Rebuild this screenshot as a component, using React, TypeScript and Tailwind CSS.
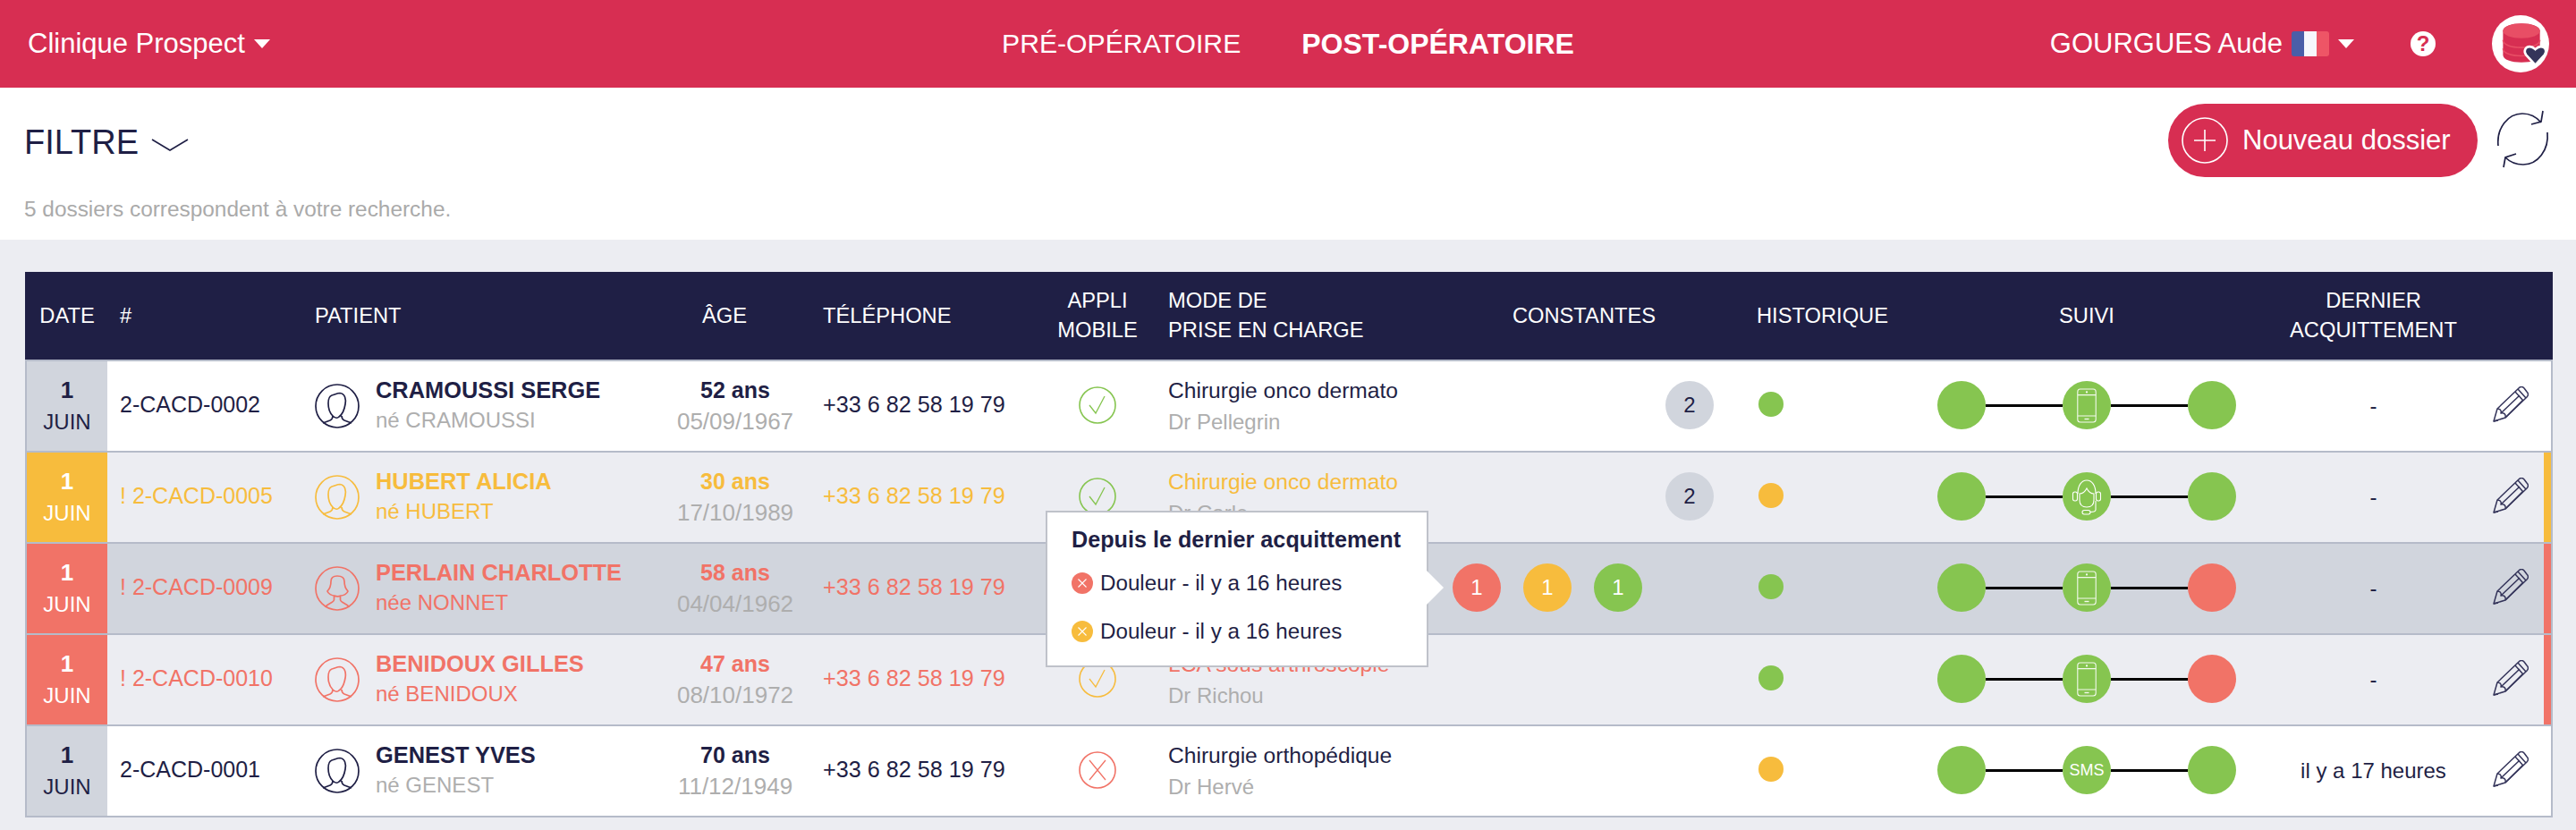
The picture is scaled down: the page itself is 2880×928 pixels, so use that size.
import React from "react";

const gridCols = "grid grid-cols-[90px_232px_378px_160px_280px_114px_340px_340px_202px_354px_267px_65px]";

type Tone = "navy" | "yellow" | "coral";

const textTone: Record<Tone, string> = {
  navy: "text-[#1f1f45]",
  yellow: "text-[#f7bc3d]",
  coral: "text-[#f17367]",
};
const stroke: Record<Tone, string> = { navy: "#1f1f45", yellow: "#f7bc3d", coral: "#f17367" };

const GREEN = "bg-[#86c550]";
const CORAL = "bg-[#f17367]";
const YELLOW = "bg-[#f7bc3d]";

const Caret = () => (
  <svg width="18" height="10" viewBox="0 0 18 10" className="shrink-0">
    <polygon points="0,0 18,0 9,10" fill="#fff" />
  </svg>
);

const PersonIcon = ({ tone, female }: { tone: Tone; female?: boolean }) => (
  <svg width="50" height="50" viewBox="0 0 50 50" fill="none" stroke={stroke[tone]} strokeWidth="1.7" className="shrink-0">
    <circle cx="25" cy="25" r="24" />
    {female ? (
      <path d="M25 11c-4 0-7 2-7 6 0 5-1 8-4 11 1 3 5 5 8 5 2 1 5 1 7 0 3 0 7-2 8-5-3-3-4-6-4-11 0-4-3-6-8-6ZM21.500 33.500v4c0 3-6 4-10 8M28.500 33.500v4c0 3 6 4 10 8" />
    ) : (
      <path d="M28 10.500c-3 0-6 2-9 2.500-3 1-4 4-4 9 0 6 2 11 5 14 2 2 5 3 7 1 3-2 6-8 7-14 1-5 0-12-6-12.500ZM20 36c0 3-1 4-3 5l-8 3M30 36c0 3 1 4 3 5l8 3" />
    )}
  </svg>
);

const PencilIcon = () => (
  <svg width="40" height="40" viewBox="0 0 40 40" fill="none" stroke="#34345a" strokeWidth="1.5" strokeLinejoin="round" className="shrink-0">
    <path d="M1 39 5 25 29 2c2-2 4-2 6 0l3 4c2 2 2 4 0 6L14 35Z" />
    <path d="M5 25c3 0 5 2 4 5 3-1 6 1 5 5M25 6l9 10M28 3l9 10M9 30 30 10M14 35 34 15M1 39l5-1" />
  </svg>
);

const CheckIcon = ({ color }: { color: string }) => (
  <svg width="42" height="42" viewBox="0 0 42 42" fill="none" stroke={color} className="shrink-0">
    <circle cx="21" cy="21" r="20" strokeWidth="1.6" />
    <path d="M12 21l7 9 10-19" strokeWidth="1.3" />
  </svg>
);

const CrossIcon = ({ color }: { color: string }) => (
  <svg width="42" height="42" viewBox="0 0 42 42" fill="none" stroke={color} className="shrink-0">
    <circle cx="21" cy="21" r="20" strokeWidth="1.6" />
    <path d="M12 10l18 22M30 10 12 32" strokeWidth="1.3" />
  </svg>
);

const PhoneGlyph = () => (
  <svg width="54" height="54" viewBox="0 0 54 54" fill="none" stroke="#fff" strokeWidth="1.1" opacity="0.9">
    <rect x="16.8" y="9" width="20.4" height="37" rx="3" />
    <path d="M16.8 15.6h20.4M16.8 39h20.4" />
    <path d="M24.5 42.5h5" strokeWidth="1.4" />
    <circle cx="27" cy="12.4" r="0.6" fill="#fff" />
  </svg>
);

const HeadsetGlyph = () => (
  <svg width="54" height="54" viewBox="0 0 54 54" fill="none" stroke="#fff" strokeWidth="1.1">
    <path d="M17 24c0-9 4-15 10-15s10 6 10 15" />
    <path d="M19 24v7c0 5 3 8 8 8s8-3 8-8v-7c-3 0-6-2-8-6-2 4-5 6-8 6Z" />
    <rect x="11.5" y="22" width="5" height="10" rx="2.2" />
    <rect x="37.5" y="22" width="5" height="10" rx="2.2" />
    <path d="M37 32v10c0 2-2 2.500-6 2.500" />
    <rect x="22" y="42.500" width="9" height="4.500" rx="2.200" />
  </svg>
);

const RefreshIcon = () => (
  <svg width="58" height="65" viewBox="0 0 58 65" fill="none" stroke="#1f1f45" strokeWidth="1.7" className="shrink-0 overflow-visible">
    <path d="M1 40C-1 20 12 4 28 4c9 0 16 4 21 10M51 1l-2 12-11 3" />
    <path d="M56 25c2 20-11 36-27 36-8 0-15-3-20-8M7 64l2-11 12-4" />
  </svg>
);

const AvatarLogo = () => (
  <div className="w-[64px] h-[64px] rounded-full bg-white flex items-center justify-center shrink-0">
    <svg width="64" height="64" viewBox="0 0 62 62">
      <path d="M12 17c0-5 9-8 20-8s20 3 20 8v26c0 5-9 8-20 8s-20-3-20-8Z" fill="#d72e52" />
      <ellipse cx="32" cy="17" rx="20" ry="8" fill="#e84e65" />
      <path d="M12 27c0 5 9 8 20 8s20-3 20-8M12 36c0 5 9 8 20 8s20-3 20-8" fill="none" stroke="#e84e65" strokeWidth="1.5" />
      <path d="M47 54 37 43c-3-4-1-9 4-9 3 0 5 2 6 3 1-1 3-3 6-3 5 0 7 5 4 9Z" fill="#34345a" stroke="#fff" strokeWidth="2.500" />
    </svg>
  </div>
);

const Bubble = ({ className, children }: { className: string; children?: React.ReactNode }) => (
  <div className={`w-[54px] h-[54px] rounded-full flex items-center justify-center text-[24px] shrink-0 ${className}`}>
    {children}
  </div>
);

const TooltipDot = ({ className }: { className: string }) => (
  <span className={`w-[24px] h-[24px] rounded-full flex items-center justify-center shrink-0 ${className}`}>
    <svg width="12" height="12" viewBox="0 0 12 12" stroke="#fff" strokeWidth="1.1">
      <path d="M1.500 1.500l9 9M10.500 1.500l-9 9" />
    </svg>
  </span>
);

const Tooltip = () => (
  <div className="absolute left-[-455px] top-[-37px] z-10 w-[428px] h-[175px] bg-white border-2 border-[#bfc2ca] pl-[27px] pt-[15px] text-[#1f1f45]">
    <div className="text-[25.2px] font-bold leading-[30px]">Depuis le dernier acquittement</div>
    <div className="mt-[21px] flex items-center gap-[8px] h-[26px] text-[24.2px]">
      <TooltipDot className={CORAL} />
      Douleur - il y a 16 heures
    </div>
    <div className="mt-[28px] flex items-center gap-[8px] h-[26px] text-[24.2px]">
      <TooltipDot className={YELLOW} />
      Douleur - il y a 16 heures
    </div>
    <svg width="20" height="38" viewBox="0 0 20 38" className="absolute left-[424px] top-[65px]">
      <polygon points="0,0 19,19 0,38" fill="#fff" />
    </svg>
  </div>
);

type Row = {
  tone: Tone;
  rowBg: string;
  dateBg: string;
  dateText: string;
  num: string;
  name: string;
  birth: string;
  female?: boolean;
  age: string;
  dob: string;
  app: React.ReactNode;
  mode: string;
  doctor: string;
  constantes: React.ReactNode;
  histo: string;
  middle: React.ReactNode;
  last: string;
  ack: string;
  bar?: string;
};

const badgeTwo = (
  <Bubble className="bg-[#d1d5dd] text-[#1f1f45] ml-[238px]">2</Bubble>
);

const rows: Row[] = [
  {
    tone: "navy", rowBg: "bg-white", dateBg: "bg-[#d1d5dd]", dateText: "text-[#1f1f45]",
    num: "2-CACD-0002", name: "CRAMOUSSI SERGE", birth: "né CRAMOUSSI", age: "52 ans", dob: "05/09/1967",
    app: <CheckIcon color="#86c550" />, mode: "Chirurgie onco dermato", doctor: "Dr Pellegrin",
    constantes: badgeTwo, histo: GREEN, middle: <PhoneGlyph />, last: GREEN, ack: "-",
  },
  {
    tone: "yellow", rowBg: "bg-[#ecedf2]", dateBg: YELLOW, dateText: "text-white",
    num: "! 2-CACD-0005", name: "HUBERT ALICIA", birth: "né HUBERT", age: "30 ans", dob: "17/10/1989",
    app: <CheckIcon color="#86c550" />, mode: "Chirurgie onco dermato", doctor: "Dr Carle",
    constantes: badgeTwo, histo: YELLOW, middle: <HeadsetGlyph />, last: GREEN, ack: "-", bar: YELLOW,
  },
  {
    // the tooltip hides the mode cell of this row
    tone: "coral", rowBg: "bg-[#d1d5dd]", dateBg: CORAL, dateText: "text-white",
    num: "! 2-CACD-0009", name: "PERLAIN CHARLOTTE", birth: "née NONNET", female: true, age: "58 ans", dob: "04/04/1962",
    app: null, mode: "", doctor: "",
    constantes: (
      <>
        <Tooltip />
        <div className="flex gap-[25px]">
          <Bubble className={`${CORAL} text-white`}>1</Bubble>
          <Bubble className={`${YELLOW} text-white`}>1</Bubble>
          <Bubble className={`${GREEN} text-white`}>1</Bubble>
        </div>
      </>
    ),
    histo: GREEN, middle: <PhoneGlyph />, last: CORAL, ack: "-", bar: CORAL,
  },
  {
    tone: "coral", rowBg: "bg-[#ecedf2]", dateBg: CORAL, dateText: "text-white",
    num: "! 2-CACD-0010", name: "BENIDOUX GILLES", birth: "né BENIDOUX", age: "47 ans", dob: "08/10/1972",
    app: <CheckIcon color="#f7bc3d" />, mode: "LCA sous arthroscopie", doctor: "Dr Richou",
    constantes: null, histo: GREEN, middle: <PhoneGlyph />, last: CORAL, ack: "-", bar: CORAL,
  },
  {
    tone: "navy", rowBg: "bg-white", dateBg: "bg-[#d1d5dd]", dateText: "text-[#1f1f45]",
    num: "2-CACD-0001", name: "GENEST YVES", birth: "né GENEST", age: "70 ans", dob: "11/12/1949",
    app: <CrossIcon color="#f17367" />, mode: "Chirurgie orthopédique", doctor: "Dr Hervé",
    constantes: null, histo: YELLOW, middle: <span className="text-white text-[18px]">SMS</span>, last: GREEN, ack: "il y a 17 heures",
  },
];

const TableRow = ({ row }: { row: Row }) => {
  const color = textTone[row.tone];
  const gray = "text-[#aeaeae]";
  return (
    <div className={`${gridCols} h-[102px] last:h-[100px] border-b-2 last:border-b-0 border-[#b5bbc9] ${row.rowBg}`}>
      <div className={`flex flex-col items-center justify-center ${row.dateBg} ${row.dateText}`}>
        <span className="text-[26px] font-bold leading-[35px]">1</span>
        <span className="text-[24px] leading-[35px]">JUIN</span>
      </div>
      <div className={`flex items-center pl-[14px] pb-[2px] text-[25px] ${color}`}>{row.num}</div>
      <div className="flex items-center gap-[18px]">
        <PersonIcon tone={row.tone} female={row.female} />
        <div className="leading-[34px] pb-[3px]">
          <div className={`text-[25.4px] font-bold ${color}`}>{row.name}</div>
          <div className={`text-[24px] ${row.tone === "navy" ? gray : color}`}>{row.birth}</div>
        </div>
      </div>
      <div className="flex flex-col items-center justify-center leading-[35px] pl-[24px]">
        <span className={`text-[25px] font-bold ${color}`}>{row.age}</span>
        <span className={`text-[26px] ${gray}`}>{row.dob}</span>
      </div>
      <div className={`flex items-center pl-[30px] pb-[2px] text-[25.2px] ${color}`}>+33 6 82 58 19 79</div>
      <div className="flex items-center justify-center pb-[3px]">{row.app}</div>
      <div className="flex flex-col justify-center pl-[22px] leading-[35px] text-[24.6px]">
        <span className={color}>{row.mode}</span>
        <span className={`text-[24px] ${gray}`}>{row.doctor}</span>
      </div>
      <div className="relative flex items-center pb-[2px]">{row.constantes}</div>
      <div className="flex items-center pl-[2px] pb-[4px]">
        <span className={`w-[28px] h-[28px] rounded-full ${row.histo}`} />
      </div>
      <div className="flex items-center pb-[2px]">
        <Bubble className={GREEN} />
        <div className="w-[86px] h-[3px] bg-black" />
        <Bubble className={GREEN}>{row.middle}</Bubble>
        <div className="w-[86px] h-[3px] bg-black" />
        <Bubble className={row.last} />
      </div>
      <div className="flex items-center justify-center text-[24px] text-[#1f1f45]">{row.ack}</div>
      <div className="flex items-center">
        <div className="pb-[4px]"><PencilIcon /></div>
        {row.bar && <div className={`ml-auto w-[8px] self-stretch ${row.bar}`} />}
      </div>
    </div>
  );
};

export default function App() {
  return (
    <div className="min-h-[928px] bg-[#ecedf2] font-['Liberation_Sans',sans-serif]">
      <nav className="h-[98px] bg-[#d72e52] text-white flex items-center pl-[31px] pr-[30px] text-[31px]">
        <div className="w-[1089px] flex items-center gap-[10px] shrink-0">
          Clinique Prospect
          <Caret />
        </div>
        <span className="text-[30.2px]">PRÉ-OPÉRATOIRE</span>
        <span className="ml-[68px] text-[32px] font-bold">POST-OPÉRATOIRE</span>
        <div className="ml-auto flex items-center">
          <span>GOURGUES Aude</span>
          <div className="ml-[10px] w-[42px] h-[28px] rounded-[3px] overflow-hidden flex">
            <div className="flex-1 bg-[#4a5ea8]" />
            <div className="flex-1 bg-[#f6f7fc]" />
            <div className="flex-1 bg-[#ee5566]" />
          </div>
          <div className="ml-[10px]"><Caret /></div>
          <div className="ml-[63px] w-[28px] h-[28px] rounded-full bg-white flex items-center justify-center text-[#d72e52] text-[24px] font-bold">?</div>
          <div className="ml-[63px]"><AvatarLogo /></div>
        </div>
      </nav>

      <section className="h-[170px] bg-white pl-[27px] pr-[30px] flex justify-between">
        <div>
          <div className="mt-[39px] flex items-center gap-[14px] text-[38px] leading-[44px] text-[#1f1f45]">
            FILTRE
            <svg width="42" height="14" viewBox="0 0 42 14" fill="none" stroke="#1f1f45" strokeWidth="1.6" className="mt-[6px]">
              <path d="M1 1l20 12L41 1" />
            </svg>
          </div>
          <p className="mt-[38px] text-[24.4px] leading-[30px] text-[#aaaaaa]">5 dossiers correspondent à votre recherche.</p>
        </div>
        <div className="flex items-start">
          <button className="mt-[18px] h-[82px] w-[346px] rounded-full bg-[#d72e52] text-white flex items-center pl-[15px] gap-[16px] text-[31px]">
            <svg width="52" height="52" viewBox="0 0 52 52" fill="none" stroke="#fff" strokeWidth="1.6" className="shrink-0">
              <circle cx="26" cy="26" r="25" />
              <path d="M26 14v24M14 26h24" />
            </svg>
            Nouveau dossier
          </button>
          <div className="ml-[22px] mt-[25px]"><RefreshIcon /></div>
        </div>
      </section>

      <main className="pt-[36px] pl-[28px] pr-[26px]">
        <div className={`${gridCols} h-[98px] px-[2px] bg-[#1f1f45] text-white text-[23.7px] leading-[33px] items-center`}>
          <div className="text-center">DATE</div>
          <div className="pl-[14px]">#</div>
          <div>PATIENT</div>
          <div className="text-center">ÂGE</div>
          <div className="pl-[30px]">TÉLÉPHONE</div>
          <div className="text-center">APPLI<br />MOBILE</div>
          <div className="pl-[22px]">MODE DE<br />PRISE EN CHARGE</div>
          <div className="text-center pr-[46px]">CONSTANTES</div>
          <div>HISTORIQUE</div>
          <div className="text-center pr-[20px]">SUIVI</div>
          <div className="text-center">DERNIER<br />ACQUITTEMENT</div>
          <div />
        </div>
        <div className="border-2 border-[#b5bbc9]">
          {rows.map((row) => (
            <TableRow key={row.num} row={row} />
          ))}
        </div>
      </main>
    </div>
  );
}
